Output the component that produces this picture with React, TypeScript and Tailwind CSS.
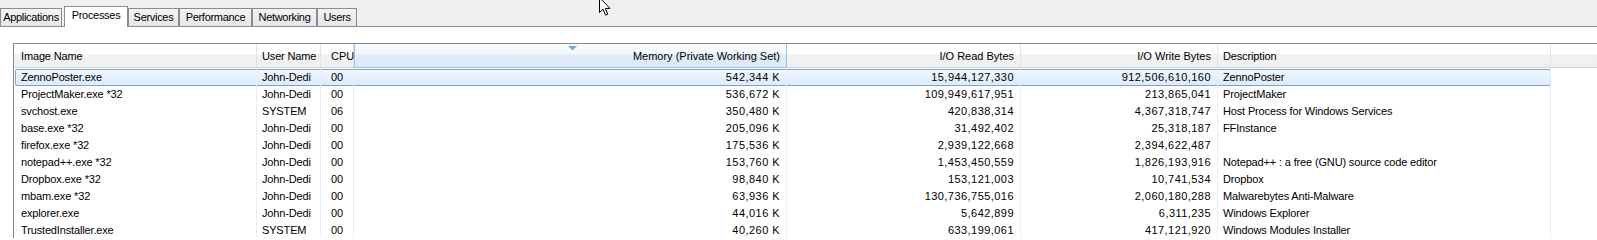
import React from 'react';

const tabs = [
  { name: 'Applications', w: 'w-[62px]' },
  { name: 'Processes', w: 'w-[64px]', active: true },
  { name: 'Services', w: 'w-[51px]' },
  { name: 'Performance', w: 'w-[73px]' },
  { name: 'Networking', w: 'w-[65px]' },
  { name: 'Users', w: 'w-[40px]' },
];

const columns = [
  { name: 'Image Name', w: 'w-[243px]', align: 'left' },
  { name: 'User Name', w: 'w-[64px]', align: 'left' },
  { name: 'CPU', w: 'w-[33px]', align: 'cpu' },
  { name: 'Memory (Private Working Set)', w: 'w-[433px]', align: 'right', sorted: true },
  { name: 'I/O Read Bytes', w: 'w-[234px]', align: 'right' },
  { name: 'I/O Write Bytes', w: 'w-[197px]', align: 'right' },
  { name: 'Description', w: 'w-[333px]', align: 'left' },
];

const rows = [
  ['ZennoPoster.exe', 'John-Dedi', '00', '542,344 K', '15,944,127,330', '912,506,610,160', 'ZennoPoster'],
  ['ProjectMaker.exe *32', 'John-Dedi', '00', '536,672 K', '109,949,617,951', '213,865,041', 'ProjectMaker'],
  ['svchost.exe', 'SYSTEM', '06', '350,480 K', '420,838,314', '4,367,318,747', 'Host Process for Windows Services'],
  ['base.exe *32', 'John-Dedi', '00', '205,096 K', '31,492,402', '25,318,187', 'FFInstance'],
  ['firefox.exe *32', 'John-Dedi', '00', '175,536 K', '2,939,122,668', '2,394,622,487', ''],
  ['notepad++.exe *32', 'John-Dedi', '00', '153,760 K', '1,453,450,559', '1,826,193,916', 'Notepad++ : a free (GNU) source code editor'],
  ['Dropbox.exe *32', 'John-Dedi', '00', '98,840 K', '153,121,003', '10,741,534', 'Dropbox'],
  ['mbam.exe *32', 'John-Dedi', '00', '63,936 K', '130,736,755,016', '2,060,180,288', 'Malwarebytes Anti-Malware'],
  ['explorer.exe', 'John-Dedi', '00', '44,016 K', '5,642,899', '6,311,235', 'Windows Explorer'],
  ['TrustedInstaller.exe', 'SYSTEM', '00', '40,260 K', '633,199,061', '417,121,920', 'Windows Modules Installer'],
];

const cellPad = (align: string, first: boolean) => {
  if (align === 'right') return 'justify-end pr-[6px] tracking-[0.45px]';
  if (align === 'cpu') return 'pl-[10px]';
  return first ? 'pl-[7px] tracking-[-0.15px]' : 'pl-[5px] tracking-[-0.15px]';
};

const App = () => {
  return (
    <div
      className="relative w-[1597px] h-[240px] overflow-hidden bg-white text-black text-[11px]"
      style={{ fontFamily: '"Liberation Sans", Arial, sans-serif' }}
    >
      {/* Tabs */}
      <div className="h-[27px] bg-[#f0f0f0] border-b border-[#898c95] flex items-end">
        {tabs.map((tab, i) => (
          <div
            key={tab.name}
            className={`${tab.w} ${i === 1 ? 'ml-[2px]' : ''} ${
              tab.active
                ? 'h-[21px] -mb-px relative z-10 bg-white border border-b-0 border-[#898c95] pb-[3px]'
                : 'h-[18px] border border-b-0 border-[#898c95] bg-[linear-gradient(to_bottom,#f3f3f3,#e6e6e6)]'
            } flex items-center justify-center tracking-[-0.3px] leading-none`}
          >
            {tab.name}
          </div>
        ))}
      </div>

      {/* List view */}
      <div className="pt-[16px] pl-[13px]">
        <div className="border-t border-l border-[#828790]">
          {/* Header */}
          <div className="flex h-[24px]">
            {columns.map((col, i) => (
              <div
                key={col.name}
                className={`${col.w} relative flex items-center pt-[2px] ${cellPad(col.align, i === 0)} ${
                  col.sorted
                    ? 'bg-[linear-gradient(to_bottom,#f7fbfe_0%,#f2f8fd_45%,#e0ecf8_46%,#dce9f6_100%)] border-l border-r border-b border-[#96c5e8]'
                    : 'bg-[linear-gradient(to_bottom,#ffffff_0%,#ffffff_42%,#f2f2f2_43%,#efefef_100%)] border-r border-r-[#e3e3e3] border-b border-b-[#d5d5d5]'
                } ${col.align === 'right' ? 'tracking-normal' : ''}`}
              >
                {col.sorted && (
                  <svg className="absolute top-[2px] left-[213px]" width="9" height="5" viewBox="0 0 9 5">
                    <path d="M0 0 H9 L4.5 4.5 Z" fill="#7aa9d6" />
                  </svg>
                )}
                {col.name}
              </div>
            ))}
            <div className="flex-1 bg-[linear-gradient(to_bottom,#ffffff_0%,#ffffff_42%,#f2f2f2_43%,#efefef_100%)] border-b border-[#d5d5d5]" />
          </div>

          {/* Rows */}
          {rows.map((row, r) => (
            <div key={r} className="relative flex h-[17px]">
              {r === 0 && (
                <div className="absolute left-px top-px w-[1536px] h-[17px] rounded-[2px] border border-[#7da2ce] bg-[linear-gradient(to_bottom,#f1f7fe,#dcebfc)]" />
              )}
              {row.map((cell, c) => (
                <div
                  key={c}
                  className={`${columns[c].w} relative flex items-center whitespace-nowrap border-r border-[#e9eef6] pt-[2px] ${cellPad(
                    columns[c].align,
                    c === 0
                  )}`}
                >
                  {cell}
                </div>
              ))}
            </div>
          ))}
        </div>
      </div>

      {/* Mouse pointer */}
      <svg className="absolute left-[598px] top-[-3px]" width="14" height="20" viewBox="0 0 14 20">
        <path
          d="M1.5 0.5 L1.5 15.5 L5 12.2 L7.6 18.2 L9.8 17.2 L7.3 11.4 L12 11.4 Z"
          fill="#ffffff"
          stroke="#000000"
          strokeWidth="1"
          strokeLinejoin="miter"
        />
      </svg>
    </div>
  );
};

export default App;
